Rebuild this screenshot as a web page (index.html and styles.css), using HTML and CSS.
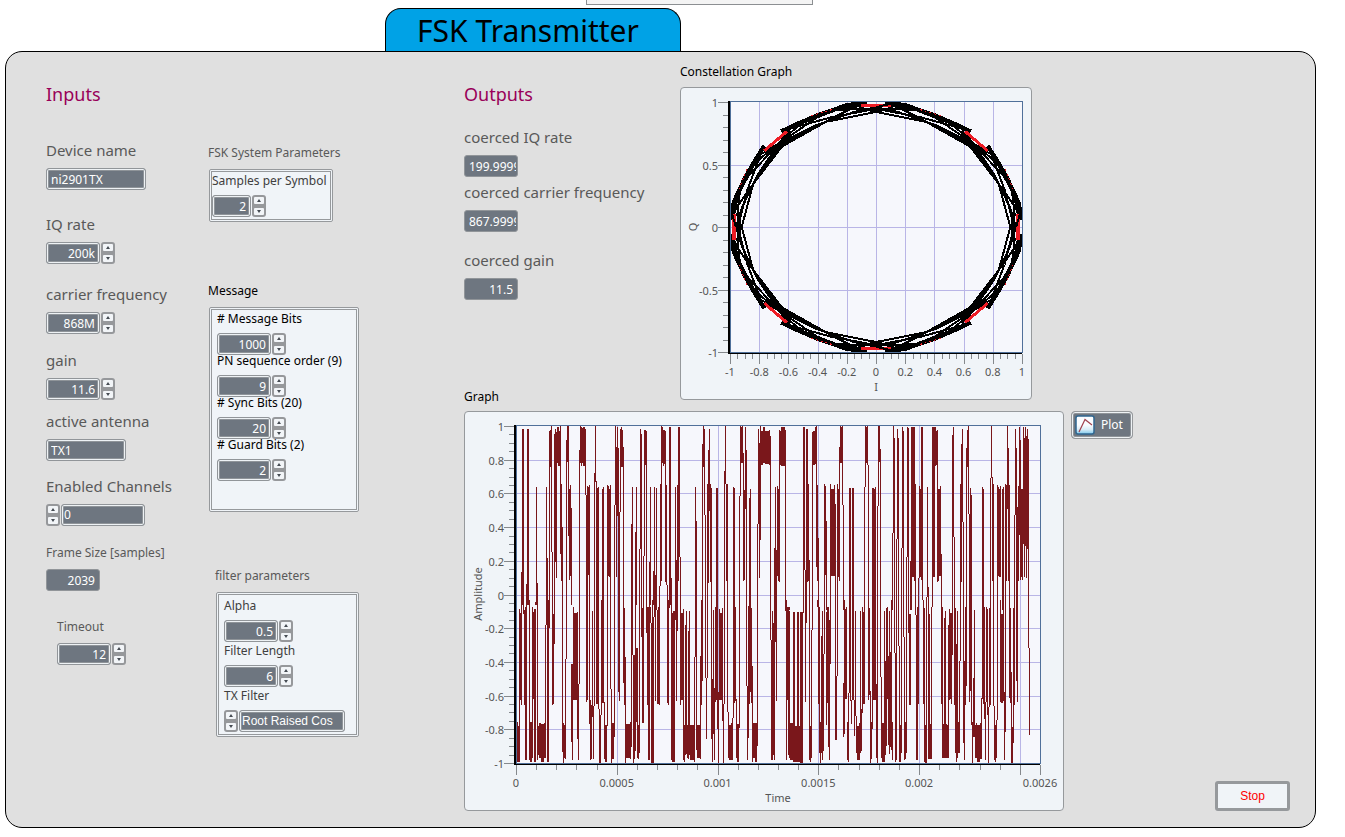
FILE: index.html
```html
<!DOCTYPE html>
<html lang="en">
<head>
<meta charset="utf-8">
<title>FSK Transmitter</title>
<link rel="stylesheet" href="styles.css">
</head>
<body>
<div class="dock"></div>
<header class="tab"><h1>FSK Transmitter</h1></header>
<main class="panel">
  <section class="col inputs">
    <h2>Inputs</h2>
    <div class="field"><label for="dev">Device name</label><div class="ctl"><input class="box wide" id="dev" value="ni2901TX"></div></div>
    <div class="field s25"><label for="iq">IQ rate</label><div class="ctl"><input class="box num" id="iq" value="200k"><span class="step"></span></div></div>
    <div class="field s21"><label for="cf">carrier frequency</label><div class="ctl"><input class="box num" id="cf" value="868M"><span class="step"></span></div></div>
    <div class="field s17"><label for="gain">gain</label><div class="ctl"><input class="box num" id="gain" value="11.6"><span class="step"></span></div></div>
    <div class="field s12"><label for="ant">active antenna</label><div class="ctl"><input class="box mid" id="ant" value="TX1"></div></div>
    <div class="field s16"><label for="chan">Enabled Channels</label><div class="ctl"><span class="step"></span><input class="box chan" id="chan" value="0"></div></div>
    <div class="field small s17"><label for="frame">Frame Size [samples]</label><div class="ctl"><input class="box num flat" id="frame" value="2039" readonly></div></div>
    <div class="field small s26 inset"><label for="to">Timeout</label><div class="ctl"><input class="box num" id="to" value="12"><span class="step"></span></div></div>
  </section>

  <section class="col groups">
    <div class="group">
      <h3 class="soft">FSK System Parameters</h3>
      <div class="cluster samples">
        <div class="item soft"><label for="sps">Samples per Symbol</label><div class="ctl"><input class="box num short" id="sps" value="2"><span class="step"></span></div></div>
      </div>
    </div>
    <div class="group g-message">
      <h3>Message</h3>
      <div class="cluster message">
        <div class="item"><label for="mb"># Message Bits</label><div class="ctl"><input class="box num" id="mb" value="1000"><span class="step"></span></div></div>
        <div class="item"><label for="pn">PN sequence order (9)</label><div class="ctl"><input class="box num" id="pn" value="9"><span class="step"></span></div></div>
        <div class="item"><label for="sb"># Sync Bits (20)</label><div class="ctl"><input class="box num" id="sb" value="20"><span class="step"></span></div></div>
        <div class="item"><label for="gb"># Guard Bits (2)</label><div class="ctl"><input class="box num" id="gb" value="2"><span class="step"></span></div></div>
      </div>
    </div>
    <div class="group g-filter">
      <h3 class="soft">filter parameters</h3>
      <div class="cluster filter">
        <div class="item soft"><label for="al">Alpha</label><div class="ctl"><input class="box num" id="al" value="0.5"><span class="step"></span></div></div>
        <div class="item soft"><label for="fl">Filter Length</label><div class="ctl"><input class="box num" id="fl" value="6"><span class="step"></span></div></div>
        <div class="item soft"><label for="tf">TX Filter</label><div class="ctl"><span class="step"></span><input class="box ring" id="tf" value="Root Raised Cos"></div></div>
      </div>
    </div>
  </section>

  <section class="results">
    <div class="top">
      <div class="outputs">
        <h2>Outputs</h2>
        <div class="field"><label for="ciq">coerced IQ rate</label><div class="ctl"><input class="box clip flat" id="ciq" value="199.9999" readonly></div></div>
        <div class="field s6"><label for="ccf">coerced carrier frequency</label><div class="ctl"><input class="box clip flat" id="ccf" value="867.9999" readonly></div></div>
        <div class="field s19"><label for="cg">coerced gain</label><div class="ctl"><input class="box num flat" id="cg" value="11.5" readonly></div></div>
        <h3 class="graph-title" id="gt">Graph</h3>
      </div>
      <figure class="constellation">
        <figcaption>Constellation Graph</figcaption>
        <svg class="chart" id="iqChart" viewBox="0 0 350 311" role="img" aria-label="Constellation Graph"></svg>
      </figure>
    </div>
    <div class="bottom">
      <svg class="chart wave" id="waveChart" viewBox="0 0 598 398" role="img" aria-labelledby="gt"></svg>
      <button class="plot" type="button">
        <svg viewBox="0 0 20 20" width="20" height="20" aria-hidden="true"><defs><linearGradient id="sky" x1="0" y1="0" x2="0" y2="1"><stop offset="0.5" stop-color="#fafcff"/><stop offset="0.75" stop-color="#d8ecf6"/><stop offset="1" stop-color="#7cc8ec"/></linearGradient></defs><rect x="1" y="1" width="18" height="18" rx="2" fill="url(#sky)" stroke="#2f6690" stroke-width="1.5"/><path d="M4 17L10 4.500L17 10" fill="none" stroke="#a0414e" stroke-width="1.200"/></svg>
        <span>Plot</span>
      </button>
      <button class="stop" type="button">Stop</button>
    </div>
  </section>
</main>
<script src="charts.js"></script>
</body>
</html>
```
FILE: styles.css
```css
* { box-sizing: border-box; }
body { margin: 0; background: #fff; color: #000; font: 12px/16px "Noto Sans", "Open Sans", sans-serif; }
h1, h2, h3, figure { margin: 0; font-weight: 400; }
.dock { width: 227px; height: 5px; margin-left: 586px; border: 1px solid #8c8f92; border-top: 0; background: #f4f4f4; }
.tab { width: 296px; height: 43px; margin: 3px 0 0 385px; border: 1px solid #000; border-bottom: 0; border-radius: 16px 16px 0 0; background: #00a2e6; }
.tab h1 { font-size: 30px; line-height: 44px; text-align: center; padding-right: 10px; }
.panel { display: flex; margin: 0 29px 9px 5px; padding: 13px 25px 16px 40px; border: 1px solid #000; border-radius: 17px; background: #e0e0e0; }
h2 { margin-top: 15px; font-size: 18px; line-height: 28px; color: #990059; }
.col { flex: none; display: flex; flex-direction: column; align-items: flex-start; }
.inputs { width: 162px; }
.inputs h2 { margin-bottom: 33px; }
.groups { width: 256px; padding-top: 78px; }

.field label { display: block; height: 20px; margin-bottom: 7px; font-size: 15px; line-height: 18px; color: #595959; white-space: nowrap; }
.field.small label { margin-bottom: 6px; font-size: 12px; line-height: 20px; }
.s6 { margin-top: 6px; }
.s12 { margin-top: 12px; }
.s16 { margin-top: 16px; }
.s17 { margin-top: 17px; }
.s19 { margin-top: 19px; }
.s21 { margin-top: 21px; }
.s25 { margin-top: 25px; }
.s26 { margin-top: 26px; }
.inset { margin-left: 11px; }

.ctl { display: flex; gap: 1px; height: 22px; }
.box { height: 22px; margin: 0; padding: 1px 5px; border: 1px solid #919599; border-radius: 3px; background: #6e7680; box-shadow: inset 0 0 0 1px #eef2f5, inset 0 0 0 2px #8f9499; color: #fff; font: 12px/18px "Noto Sans", "Open Sans", sans-serif; outline: 0; }
.wide { width: 100px; padding-left: 4px; }
.mid { width: 80px; padding-left: 4px; }
.num { width: 54px; padding-right: 4px; text-align: right; }
.short { width: 39px; }
.chan { width: 84px; padding: 0 2px 2px; }
.ring { width: 106px; padding: 0 2px; font-family: "Liberation Sans", Arial, sans-serif; }
.flat { width: 54px; box-shadow: none; }
.clip { padding: 1px 1px 1px 4px; }
.step { display: flex; flex-direction: column; justify-content: space-between; width: 14px; height: 22px; padding: 2px; border-radius: 3px; background: #96989b; }
.step button { display: flex; align-items: center; justify-content: center; width: 10px; height: 7px; padding: 0; border: 0; border-radius: 1px; background: #f2f5f8; }
.step i { border: 2px solid transparent; border-top: 0; border-bottom: 3px solid #454b52; }
.step button + button i { border-bottom: 0; border-top: 3px solid #454b52; }

.group h3 { height: 20px; margin-bottom: 6px; font-size: 12px; line-height: 20px; }
.soft, .soft label { color: #595959; }
.g-message { margin-top: 59px; }
.g-filter { margin: 54px 0 0 7px; }
.cluster { display: flex; flex-direction: column; margin-left: 1px; padding: 3px 5px 2px; border: 3px double #96999c; border-radius: 2px; background: #f0f4f8; }
.item label { display: block; height: 12px; margin-bottom: 8px; line-height: 12px; white-space: nowrap; }
.cluster .item label { color: #000; }
.cluster .soft label { color: #404040; }
.samples { width: 124px; padding-left: 0; }
.message { width: 150px; min-height: 205px; }
.filter { width: 143px; gap: 3px; padding-top: 5px; }

.results { flex: 1; display: flex; flex-direction: column; }
.top { display: flex; height: 338px; }
.outputs { display: flex; flex-direction: column; flex: none; width: 216px; }
.outputs h2 { margin-bottom: 20px; }
.graph-title { margin-top: auto; font-size: 12px; line-height: 12px; }
.constellation { flex: 0 1 352px; }
.constellation figcaption { margin-bottom: 8px; line-height: 14px; }
.chart { display: block; width: 100%; border: 1px solid #96999c; border-radius: 4px; background: #f0f4f8; }
.chart text { font: 11px "Noto Sans", "Open Sans", sans-serif; fill: #555; }
.bottom { display: flex; align-items: flex-start; margin-top: 8px; }
.wave { flex: 0 1 600px; width: 600px; }
.plot { display: flex; align-items: center; gap: 6px; width: 62px; height: 28px; margin-left: 7px; padding: 0 3px; border: 1px solid #96999c; border-radius: 4px; background: #6e7680; box-shadow: inset 0 0 0 1px #eef2f5, inset 0 0 0 2px #8f9499; color: #fff; font: 12px/16px "Noto Sans", "Open Sans", sans-serif; white-space: nowrap; }
.plot svg { flex: none; }
.stop { align-self: flex-end; width: 75px; height: 30px; margin-left: auto; padding: 0; border: 3px solid #96999c; border-radius: 3px; background: #f0f4f8; color: #f00; font: 12px "Liberation Sans", Arial, sans-serif; }
```
FILE: charts.js
```js
document.querySelectorAll('.step').forEach(function (s) {
  s.innerHTML = '<button type="button" aria-label="Increment"><i></i></button><button type="button" aria-label="Decrement"><i></i></button>';
});

function line(x1, y1, x2, y2, color, w) {
  return '<path d="M' + x1 + ' ' + y1 + 'L' + x2 + ' ' + y2 + '" stroke="' + color + '" stroke-width="' + (w || 1) + '" fill="none"/>';
}
function text(x, y, s, anchor) {
  return '<text x="' + x + '" y="' + y + '" text-anchor="' + anchor + '">' + s + '</text>';
}
function fmt(v) { return String(Math.round(v * 10) / 10); }
var GRID = '#b9b5e6', FRAME = '#50709a', TICK = '#85898d';

/* constellation */
(function () {
  var L = 49, T = 14, W = 292, H = 250, o = '', i, x, y, v;
  var X = function (a) { return L + (a + 1) * W / 2; }, Y = function (b) { return T + (1 - b) * H / 2; };
  o += '<g shape-rendering="crispEdges"><rect x="' + L + '" y="' + T + '" width="' + W + '" height="' + H + '" fill="#f6f7fc"/>';
  for (i = 1; i < 10; i++) { x = Math.round(L + i * W / 10) + .5; o += line(x, T, x, T + H, GRID); }
  for (i = 1; i < 4; i++) { y = Math.round(T + i * H / 4) + .5; o += line(L, y, L + W, y, GRID); }
  o += '</g><clipPath id="c"><rect x="' + L + '" y="' + T + '" width="' + W + '" height="' + H + '"/></clipPath><g clip-path="url(#c)" shape-rendering="crispEdges" fill="none" stroke-linejoin="bevel">';
  /* one eighth of the trajectory bundle: [width, points...] */
  var strands = [
    [4, .06, 1, .2, .975, .4, .895, .56, .815, .65, .765],
    [3, .1, .975, .25, .95, .45, .86, .6, .79],
    [2, 0, .92, .35, .84, .76, .61],
    [2, -.1, .985, .15, .92, .42, .81, .76, .61],
    [2, .08, 1, .3, .87, .68, .62],
    [2, -.1, .93, .1, .95, .3, .93, .58, .8],
    [2, 0, .945, .3, .88, .55, .8, .64, .77],
    [2, 0, .925, .2, .96],
    [2, .35, .92, .6, .72, .72, .58],
    [2, .5, .84, .64, .7, .82, .38],
    [2, .58, .8, .66, .64, .8, .42]
  ];
  var pts = function (s, fx, fy, sw) {
    var r = [];
    for (var k = 1; k < s.length; k += 2) {
      var a = s[k], b = s[k + 1];
      if (sw) { var t = a; a = b; b = t; }
      r.push(X(a * fx).toFixed(1) + ',' + Y(b * fy).toFixed(1));
    }
    return r.join(' ');
  };
  [[1, 1], [-1, 1], [1, -1], [-1, -1]].forEach(function (f) {
    [false, true].forEach(function (sw) {
      strands.forEach(function (s) { o += '<polyline stroke="#000" stroke-width="' + s[0] + '" points="' + pts(s, f[0], f[1], sw) + '"/>'; });
      o += '<polyline stroke="#ee1c25" stroke-width="1" stroke-dasharray="2 3" points="' + pts([0, .3, .94, .46, .885], f[0], f[1], sw) + '"/>';
      o += '<polyline stroke="#ee1c25" stroke-width="' + (sw ? 4 : 3) + '" points="' + pts([0, 0, .972, .105, .972], f[0], f[1], sw) + '"/>';
    });
    o += '<polyline stroke="#ee1c25" stroke-width="3" points="' + pts([0, .61, .765, .765, .61], f[0], f[1], false) + '"/>';
  });
  o += '</g><g shape-rendering="crispEdges"><rect x="' + (L + .5) + '" y="' + (T - .5) + '" width="' + W + '" height="' + (H + 1) + '" fill="none" stroke="' + FRAME + '"/>';
  o += line(L - 1, T - 1, L - 1, T + H + 2, '#000', 2) + line(L - 2, T + H + 1.5, L + W, T + H + 1.5, '#000', 1);
  for (i = 0; i <= 20; i++) { y = Math.round(T + i * H / 20) + .5; o += line(i % 5 ? L - 7 : L - 12, y, L - 2, y, TICK); }
  for (i = 0; i <= 40; i++) { x = Math.round(L + i * W / 40) + .5; o += line(x, T + H + 2, x, T + H + (i % 4 ? 7 : 12), TICK); }
  o += '</g>';
  for (i = 0; i <= 4; i++) { o += text(L - 12, T + i * H / 4 + 5, fmt(1 - i * .5), 'end'); }
  for (i = 0; i <= 10; i++) { o += text(L + i * W / 10, T + H + 24, fmt(-1 + i * .2), 'middle'); }
  o += text(L + W / 2, T + H + 39, 'I', 'middle');
  o += '<text text-anchor="middle" transform="translate(16 139) rotate(-90)">Q</text>';
  document.getElementById('iqChart').innerHTML = o;
})();

/* amplitude trace: each strip holds marks as x,width,top,bottom in thirds of a pixel */
var strips = [
  [-5, -27, 660, '184,3,560 186,6,132 199,3,597 202,6,132 206,3,648 226,3,650 228,3,306 231,3,594 258,3,306 261,3,518 267,3,138 270,3,135,245 273,3,123,500 276,3,500 282,3,147 285,3,132,530 288,3,140,578 291,3,126,235 294,3,126,242 297,3,138,242 300,3,123,507 303,3,297,587 306,3,426 318,3,165 321,3,123,230 324,3,123,452 327,3,312,585 330,3,300,572 333,3,369 357,3,195 360,3,123,235 363,3,126,243 366,3,130,235 369,6,125,243 375,3,132,330 378,3,330 381,3,303 384,3,306,570 387,3,300 402,3,264 405,3,123,290 408,3,288 411,3,309 414,3,306 426,3,312 429,3,306 441,3,300 444,3,303,573 447,3,312,576 450,3,300 462,3,360 465,3,123,360 468,3,187,575 471,3,126,393 474,3,189 477,3,380 480,3,132,380 483,3,126,245 486,3,135,245 489,3,186 513,3,417 516,3,306 525,3,441 528,3,306 537,3,492 540,3,132,492 543,3,147 549,3,513 552,3,135,513 555,3,135,240 558,3,138 567,3,531 570,3,306 579,3,558 582,3,306 585,3,570 588,3,309 597,3,603 600,3,297,603 603,3,123,587 606,3,126,235 609,3,135,243 612,3,135,238 615,3,138,590 618,3,300,600 621,3,600 627,6,126 633,3,579 645,3,306 648,3,525 651,3,300 654,3,126,587 657,3,126,516 660,3,516 705,3,306 708,3,408'],
  [215, -2, 600, '0,3,441 9,3,597 45,3,231 48,3,333 63,3,591 66,3,102 69,3,48,170 72,3,57,315 75,3,315 81,3,222 84,3,120,518 87,3,57,303 90,3,222,515 93,3,234 105,3,591 108,6,234 117,3,597 126,3,594 132,3,183 135,3,48,222 138,3,222,512 141,3,222 159,3,231 162,3,234 165,3,591 177,3,258 180,3,48,258 183,3,51,159 186,3,48,159 189,3,129,512 192,3,240,510 195,3,51,297 198,3,120 204,3,588 207,3,264 210,3,237 213,3,594 231,3,342 234,3,57,342 237,3,99,504 240,3,48,390 243,6,63,165 249,6,51,160 255,12,63,162 267,3,60,165 270,3,78 282,3,414 285,3,231 288,3,420 291,3,228,498 294,3,237,513 297,3,60,516 300,3,63,165 303,12,51,168 315,3,60 321,3,591 327,3,591 369,3,51 372,3,51,480 375,3,480 378,3,57 381,3,57,516 384,3,222,513 387,3,450 396,3,66 399,6,62,165 405,3,51,162 408,3,48,471 411,3,225,513 414,3,384 417,3,591 432,3,222 435,3,228,495 438,3,333 444,3,591 450,3,222 453,9,237,498 462,3,225,498 465,3,282 471,3,222 474,3,237,501 477,3,111,513 480,3,48,159 483,3,51,159 486,3,48,285 489,3,285 495,3,597 498,3,591 507,6,234 516,6,234 546,3,591 552,3,231 555,3,48,231 558,3,51,159 561,3,48,165 564,3,165 567,3,594 576,6,234 582,3,237 585,3,231 591,3,288 594,3,48,288 597,3,48,156 600,3,117 618,3,594 621,3,591 636,3,369 639,3,48,369 642,3,84 648,3,387 651,3,57,387 654,3,84 663,3,414 666,3,51,414 669,3,63 678,3,441 681,3,51,441 684,3,54 690,3,453 693,3,51 696,6,51,500 702,3,51,513 705,3,222'],
  [435, -12, 630, '51,3,621 54,3,534 57,3,258,534 60,3,267,531 63,3,81,540 66,3,81,600 69,3,600 78,3,591 81,3,261,591 84,3,561 93,3,621 96,3,81,621 99,6,81,531 105,3,81,198 108,3,93,195 111,3,90,546 114,3,267,543 117,3,267,528 120,3,258,528 123,3,462 147,3,627 156,3,105 159,3,81,411 162,3,411 165,3,624 180,3,252 183,3,132,546 186,3,87,366 189,3,366 198,3,144 201,3,90,201 204,3,78,342 207,3,342 210,3,264 213,3,285 246,3,261 249,3,267 252,3,621 258,3,621 261,3,627 267,3,624 270,3,234 273,3,78,234 276,3,231,543 279,3,252 291,3,255 294,3,261,528 297,3,267,531 300,3,258,531 306,3,267 309,3,261 315,3,252 318,3,255,543 321,3,78,327 324,3,144,543 327,3,255 330,3,624 339,3,624 342,3,345 345,3,87,345 348,3,144 351,3,321 354,3,258,543 357,3,81,405 360,3,120,540 363,3,267,531 366,3,267,540 369,3,81,432 372,3,114,531 375,3,81,438 378,3,108,534 381,3,87,447 384,3,117'],
  [-5, 188, 0, '167,3,81,480 170,3,366,486 173,3,378,486 177,3,27,486 180,3,39,300 183,3,0,315 189,3,0,42 192,3,30,315 195,3,21,480 198,3,0,480 204,3,0,3 207,3,0,480 210,6,366,486 216,3,21,474 219,3,36,297 222,3,27,486 225,3,27,486 228,3,0,15 231,3,0,480 234,3,378,465 237,6,369,474 243,9,372,486 252,3,369,474 255,3,75,474 258,3,0,75 261,6,0,486 267,3,0,84 276,3,0,315 279,3,42,312 282,3,0,132 306,3,0,456 309,3,369,489 312,3,375,474 315,3,177,477 318,3,0,177 333,3,192,426 336,3,192,480 339,3,21,300 342,9,39,300 351,3,36,417 354,3,252,480 357,3,0,252 378,3,0,306 381,3,0,300 387,3,0,372 390,3,300,480 393,3,315,477 396,3,33,351 399,3,318,477 402,3,0,318 408,3,0,312 411,3,0,312 414,3,0,327 417,3,327,489 420,3,345,489 423,3,0,345 426,6,0,309 432,3,306,477 435,6,375,486 441,3,0,378 450,3,0,267 453,3,267,489 456,6,369,477 462,3,0,411 474,3,0,276 477,3,0,303 489,3,0,249 492,3,24,315 495,3,171,489 498,12,372,474 510,3,366,477 513,3,0,441 516,3,0,165 519,3,165,489 522,3,165,477 525,3,0,453 528,3,144,366 531,3,144,474 534,3,375,477 537,3,0,459 543,3,0,111 546,3,24,369 549,3,0,369 558,3,0,99 561,3,21,315 564,3,21,480 567,3,0,480 570,3,21,69 573,3,69,489 576,3,0,489 579,3,51,489 582,3,0,51 585,3,0,303 588,3,0,30 591,3,30,312 594,3,21,312 597,3,0,315 621,3,0,309 624,3,0,315 627,3,0,24 633,3,0,480 636,3,39,486 639,6,33,486 645,3,0,60 648,3,0,303 651,3,0,93'],
  [215, 188, 0, '0,3,0,315 3,6,39,300 9,3,27,480 12,3,375,486 15,3,75,465 18,3,33,462 21,3,375,474 24,3,93,477 27,3,33,465 30,12,375,480 42,3,171,486 45,3,0,171 48,3,0,450 51,12,375,474 60,3,168,477 63,3,0,315 66,3,21,243 75,3,0,234 78,3,234,417 81,3,0,234 93,3,0,417 96,3,237,486 99,3,30,402 102,3,264,480 105,3,21,306 108,3,21,300 111,3,0,387 114,3,276,489 117,3,27,300 120,6,39,300 126,3,24,363 129,3,312,489 132,3,0,312 141,3,0,336 144,3,336,474 147,9,375,480 153,3,369,480 156,3,354,480 159,3,0,354 162,3,0,309 165,3,21,303 168,3,297,474 171,6,372,486 177,3,0,384 198,3,0,258 201,3,258,480 204,3,18,414 207,3,0,312 210,3,0,276 213,3,24,309 216,3,198,486 219,12,369,474 225,6,369,486 231,3,0,438 270,3,0,120 273,3,120,480 276,3,33,480 279,3,69,465 282,3,0,480 285,3,0,126 288,3,0,303 315,3,0,33 318,3,0,480 321,6,21,300 324,3,33,465 327,3,33,474 330,9,369,480 339,6,36,486 345,24,378,486 351,6,36,486 360,9,36,489 369,3,0,39 375,3,0,306 378,3,0,69 387,3,0,480 390,3,378,486 393,3,90,474 396,3,0,90 411,3,0,21 414,3,0,312 417,3,21,459 420,3,366,489 423,3,108,459 426,3,33,480 429,3,162,453 432,3,0,162 438,3,36,375 441,3,21,310 444,3,24,441 447,3,60,480 450,3,0,192 465,3,0,420 468,3,228,420 471,3,0,228 489,3,249,411 492,3,0,402 495,6,27,297 501,3,366,480 504,3,280,486 507,3,0,280 510,3,0,303 513,3,300,372 516,3,0,300 519,3,0,300 522,3,300,408 525,3,33,348 528,3,348,459 531,6,378,480 537,3,369,480 540,3,33,459 543,3,327,453 546,3,21,339 549,3,36,312 552,3,0,312 564,3,24,300 567,3,24,285 570,3,273,489 573,3,366,477 576,3,0,387 579,9,0,300 588,3,252,474 591,3,0,489 600,3,0,231 603,3,231,474 606,6,369,486 612,3,33,486 615,3,183,465 618,3,27,438 621,3,21,297 624,3,168,435 627,3,33,462 630,3,156,441 633,3,0,450 636,3,366,480 642,3,0,159 645,3,159,486 648,3,0,480 654,3,0,138 657,3,138,486 660,3,375,486 663,3,0,459 669,3,0,111 672,3,111,480 675,3,366,477 678,3,0,459 684,3,0,99 687,6,42,315 705,3,0,45 708,3,45,480 711,3,21,480 714,3,0,312'],
  [435, 188, 0, '69,3,0,312 72,3,24,486 75,3,375,489 78,3,0,489 84,3,0,375 84,12,372,477 87,3,42,477 93,3,21,477 96,3,0,21 123,3,0,312 126,3,21,474 129,12,372,474 132,3,54,474 135,3,33,468 141,3,375,474 144,3,75,474 147,3,27,300 150,3,39,297 153,3,39,312 156,3,0,165 162,3,0,315 165,3,24,459 168,3,132,486 171,3,33,474 174,3,366,459 177,3,183,459 180,3,0,183 189,3,0,429 192,3,183,480 195,3,21,315 198,3,0,258 207,3,0,306 210,3,0,273 213,3,0,375 216,3,366,489 219,3,234,411 222,3,30,411 225,3,375,474 228,3,369,474 231,9,375,486 240,3,369,477 243,3,294,477 246,3,0,297 249,3,0,312 252,3,24,357 255,3,306,480 258,3,21,306 261,3,27,345 264,3,321,489 267,3,24,321 270,3,0,315 279,3,0,318 282,3,318,480 285,3,375,486 288,3,360,474 291,3,0,360 300,3,0,306 303,6,42,309 309,3,0,303 312,3,276,480 315,3,0,396 327,3,0,294 330,3,24,309 333,3,216,489 336,3,381,489 339,3,24,429 342,3,0,315 348,3,0,243 351,3,0,306 384,3,0,144 387,3,144,405']
];
(function () {
  var L = 51, T = 14, W = 524, H = 337, o = '', i, x, y, d = '';
  o += '<g shape-rendering="crispEdges"><rect x="' + L + '" y="' + T + '" width="' + W + '" height="' + H + '" fill="#f6f7fc"/>';
  for (i = 1; i < 10; i++) { y = Math.round(T + i * H / 10) + .5; o += line(L, y, L + W, y, GRID); }
  for (i = 1; i < 6; i++) { x = Math.round(L + i * W / 5.2) + .5; o += line(x, T, x, T + H, GRID); }
  strips.forEach(function (s) {
    s[3].split(' ').forEach(function (m) {
      var n = m.split(',').map(Number), end = n.length > 3 ? n[3] : s[2];
      var x0 = s[0] + Math.round(n[0] / 3), w = n[1] / 3, y0 = s[1] + Math.round(n[2] / 3), y1 = s[1] + Math.round(end / 3);
      d += 'M' + x0 + ' ' + y0 + 'h' + w + 'V' + y1 + 'h-' + w + 'z';
    });
  });
  o += '<path fill="#7a171b" d="' + d + '"/>';
  o += '<rect x="' + (L + .5) + '" y="' + (T - .5) + '" width="' + W + '" height="' + (H + 1) + '" fill="none" stroke="' + FRAME + '"/>';
  o += line(L - 1, T - 1, L - 1, T + H + 2, '#000', 2) + line(L - 2, T + H + 1.5, L + W, T + H + 1.5, '#000', 1);
  for (i = 0; i <= 40; i++) { y = Math.round(T + i * H / 40) + .5; o += line(i % 4 ? L - 7 : L - 12, y, L - 2, y, TICK); }
  for (i = 0; i <= 26; i++) { x = Math.round(L + i * W / 26) + .5; o += line(x, T + H + 2, x, T + H + (i % 5 && i !== 26 ? 7 : 12), TICK); }
  o += '</g>';
  for (i = 0; i <= 10; i++) { o += text(L - 12, T + i * H / 10 + 5, fmt(1 - i * .2), 'end'); }
  ['0', '0.0005', '0.001', '0.0015', '0.002'].forEach(function (s, k) { o += text(L + k * W / 5.2, T + H + 24, s, 'middle'); });
  o += text(L + W, T + H + 24, '0.0026', 'middle') + text(L + W / 2, T + H + 39, 'Time', 'middle');
  o += '<text text-anchor="middle" transform="translate(17 182) rotate(-90)">Amplitude</text>';
  document.getElementById('waveChart').innerHTML = o;
})();
```
